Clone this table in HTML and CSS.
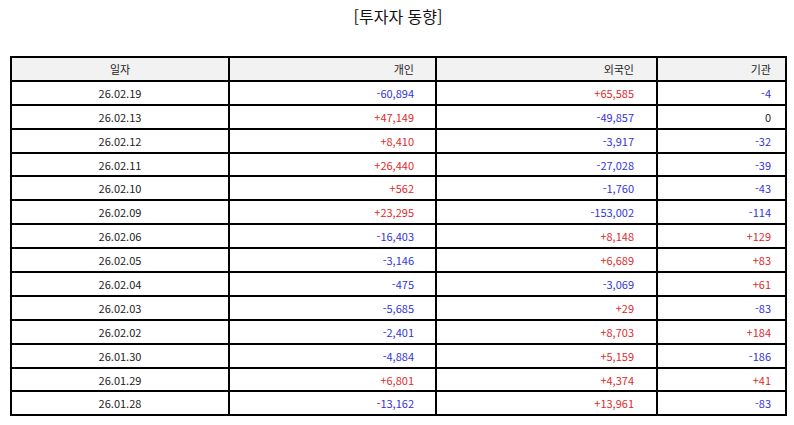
FILE: index.html
```html
<!DOCTYPE html>
<html lang="ko">
<head>
<meta charset="utf-8">
<link rel="stylesheet" href="styles.css">
</head>
<body>
<div class="page">
  <h1 class="title">[투자자 동향]</h1>
  <table class="grid">
    <colgroup>
      <col class="c-date"><col class="c-ind"><col class="c-for"><col class="c-inst">
    </colgroup>
    <thead>
      <tr><th class="date">일자</th><th class="num p2">개인</th><th class="num p3">외국인</th><th class="num p4">기관</th></tr>
    </thead>
    <tbody>
      <tr><td class="date">26.02.19</td><td class="num p2 dn">-60,894</td><td class="num p3 up">+65,585</td><td class="num p4 dn">-4</td></tr>
      <tr><td class="date">26.02.13</td><td class="num p2 up">+47,149</td><td class="num p3 dn">-49,857</td><td class="num p4">0</td></tr>
      <tr><td class="date">26.02.12</td><td class="num p2 up">+8,410</td><td class="num p3 dn">-3,917</td><td class="num p4 dn">-32</td></tr>
      <tr><td class="date">26.02.11</td><td class="num p2 up">+26,440</td><td class="num p3 dn">-27,028</td><td class="num p4 dn">-39</td></tr>
      <tr><td class="date">26.02.10</td><td class="num p2 up">+562</td><td class="num p3 dn">-1,760</td><td class="num p4 dn">-43</td></tr>
      <tr><td class="date">26.02.09</td><td class="num p2 up">+23,295</td><td class="num p3 dn">-153,002</td><td class="num p4 dn">-114</td></tr>
      <tr><td class="date">26.02.06</td><td class="num p2 dn">-16,403</td><td class="num p3 up">+8,148</td><td class="num p4 up">+129</td></tr>
      <tr><td class="date">26.02.05</td><td class="num p2 dn">-3,146</td><td class="num p3 up">+6,689</td><td class="num p4 up">+83</td></tr>
      <tr><td class="date">26.02.04</td><td class="num p2 dn">-475</td><td class="num p3 dn">-3,069</td><td class="num p4 up">+61</td></tr>
      <tr><td class="date">26.02.03</td><td class="num p2 dn">-5,685</td><td class="num p3 up">+29</td><td class="num p4 dn">-83</td></tr>
      <tr><td class="date">26.02.02</td><td class="num p2 dn">-2,401</td><td class="num p3 up">+8,703</td><td class="num p4 up">+184</td></tr>
      <tr><td class="date">26.01.30</td><td class="num p2 dn">-4,884</td><td class="num p3 up">+5,159</td><td class="num p4 dn">-186</td></tr>
      <tr><td class="date">26.01.29</td><td class="num p2 up">+6,801</td><td class="num p3 up">+4,374</td><td class="num p4 up">+41</td></tr>
      <tr><td class="date">26.01.28</td><td class="num p2 dn">-13,162</td><td class="num p3 up">+13,961</td><td class="num p4 dn">-83</td></tr>
    </tbody>
  </table>
</div>
</body>
</html>
```
FILE: styles.css
```css
html, body {
  margin: 0;
  padding: 0;
  background: #ffffff;
}
body {
  font-family: "Noto Sans CJK KR", "Noto Sans", sans-serif;
  color: #222222;
}
.page {
  padding: 4px 8px 0 10px;
}
.title {
  margin: 0 0 28px 0;
  font-size: 16px;
  font-weight: normal;
  line-height: 24px;
  text-align: center;
  color: #111111;
}
.grid {
  width: 775px;
  border-collapse: collapse;
  table-layout: fixed;
  font-size: 11px;
}
.grid tr {
  height: 23.9px;
}
.c-date { width: 218px; }
.c-ind { width: 207px; }
.c-for { width: 221px; }
.c-inst { width: 129px; }
.grid th, .grid td {
  border: 2px solid #000000;
  padding: 0;
  line-height: 14px;
  font-weight: normal;
  white-space: nowrap;
  vertical-align: middle;
}
.grid thead th {
  background: #f2f2f2;
  color: #222222;
}
.date { text-align: center; }
.num { text-align: right; }
.p2 { padding-right: 21px !important; }
.p3 { padding-right: 22px !important; }
.p4 { padding-right: 14px !important; }
.up { color: #e02a2a; }
.dn { color: #3333dd; }
```
